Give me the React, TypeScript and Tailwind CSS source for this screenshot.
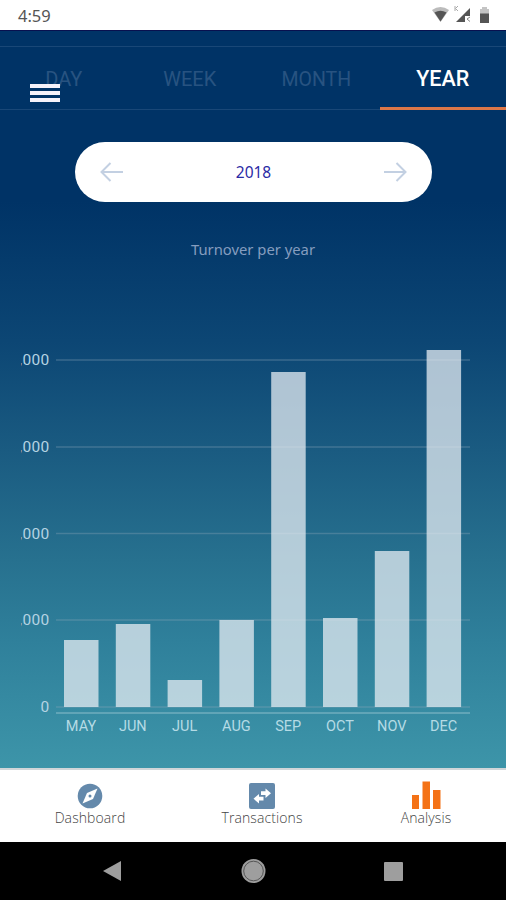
import type { ReactNode } from "react";

interface Bar {
  month: string;
  top: number;
}

const BASELINE = 707;

const BARS: Bar[] = [
  { month: "MAY", top: 640 },
  { month: "JUN", top: 624 },
  { month: "JUL", top: 680 },
  { month: "AUG", top: 620 },
  { month: "SEP", top: 372 },
  { month: "OCT", top: 618 },
  { month: "NOV", top: 551 },
  { month: "DEC", top: 350 },
];

const GRID = [
  { y: 360, label: ",000" },
  { y: 447, label: ",000" },
  { y: 533.5, label: ",000" },
  { y: 620, label: ",000" },
  { y: 707, label: "0" },
];

function StatusBar() {
  return (
    <div className="flex h-[30px] items-center justify-between bg-white pl-[18px] pr-[15px]">
      <span className="pt-[3px] font-['Noto_Sans',sans-serif] text-[16.5px] leading-none text-[#555]">
        4:59
      </span>
      <svg width="60" height="20" viewBox="0 0 60 20">
        <path d="M1 5Q9.500-1 18 5L9.500 17Z" fill="#bbb" />
        <path d="M3.500 7.500Q9.500 4 15.500 7.500L9.500 16.500Z" fill="#555" />
        <path d="M39 3V17H25Z" fill="#555" />
        <path d="M34 11h6v6h-6Z" fill="#fff" />
        <path d="M39 12l-3 2 3 2.500" fill="none" stroke="#888" />
        <path d="M24 1v5M27 1l-2.500 2.500L27 6" fill="none" stroke="#aaa" />
        <rect x="51" y="2" width="5" height="3" fill="#c4c4c4" />
        <rect x="49" y="4" width="9" height="5" fill="#c4c4c4" />
        <rect x="49" y="8.500" width="9" height="9.500" fill="#555" />
      </svg>
    </div>
  );
}

function MenuButton() {
  return (
    <button
      type="button"
      aria-label="Menu"
      className="absolute left-[30px] top-[37px] flex w-[30px] flex-col gap-[3px]"
    >
      <span className="h-1 w-full bg-[#f5f2fa]" />
      <span className="h-1 w-full bg-[#f5f2fa]" />
      <span className="h-1 w-full bg-[#f5f2fa]" />
    </button>
  );
}

function Tabs() {
  return (
    <div className="relative mt-[15px] grid h-16 grid-cols-4 border-y border-[#194777] font-[Roboto,sans-serif] text-[20px] text-[#285381]">
      <span className="flex items-center justify-center pl-px pt-px">DAY</span>
      <span className="flex items-center justify-center pt-px">WEEK</span>
      <span className="flex items-center justify-center pt-[3px] text-[19.5px]">MONTH</span>
      <span className="-mb-px flex items-center justify-center border-b-[3px] border-[#dc7748] pt-[5px] text-[21.5px] font-medium text-white">
        YEAR
      </span>
      <MenuButton />
    </div>
  );
}

function Arrow({ flip }: { flip?: boolean }) {
  return (
    <svg
      width="24"
      height="20"
      viewBox="0 0 24 20"
      fill="none"
      stroke="#c3d0e2"
      strokeWidth="2"
      className={flip ? "rotate-180" : ""}
    >
      <path d="M23 10H2M10.500 1L1.500 10l9 9" />
    </svg>
  );
}

function YearPicker() {
  return (
    <div className="mx-auto mt-8 flex h-[60px] w-[357px] items-center justify-between rounded-full bg-white px-[25px]">
      <Arrow />
      <span className="pl-px pt-0.5 font-['Noto_Sans',sans-serif] text-[15.5px] text-[#2a2aa5]">2018</span>
      <Arrow flip />
    </div>
  );
}

function TurnoverChart() {
  return (
    <svg
      width="506"
      height="440"
      viewBox="0 310 506 440"
      className="mt-[51px] block font-[Roboto,sans-serif] text-[14.5px]"
    >
      <clipPath id="labels">
        <rect x="21" y="310" width="40" height="440" />
      </clipPath>
      {GRID.map(({ y, label }) => (
        <g key={y}>
          <path d={`M56 ${y}H470`} stroke="#8da5b8" strokeOpacity="0.350" strokeWidth="1.500" />
          <text
            x="49.500"
            y={y + 5}
            textAnchor="end"
            fill="#b5d3e3"
            clipPath="url(#labels)"
            className="text-[15.5px] tracking-[0.3px]"
          >
            {label}
          </text>
        </g>
      ))}
      <path d="M56 713H470" stroke="#8bbdcc" strokeWidth="1.200" />
      {BARS.map(({ month, top }, i) => (
        <g key={month}>
          <rect
            x={64 + i * 51.8}
            y={top}
            width="34.500"
            height={BASELINE - top}
            fill="#e2eaf0"
            fillOpacity="0.760"
          />
          <text x={81 + i * 51.8} y="731.400" textAnchor="middle" fill="#b5dbe5">
            {month}
          </text>
        </g>
      ))}
    </svg>
  );
}

function NavItem({ label, className, children }: { label: string; className: string; children: ReactNode }) {
  return (
    <div className={`flex shrink-0 flex-col items-center ${className}`}>
      <div className="flex h-7 items-end">{children}</div>
      <span className="font-['Open_Sans',sans-serif] text-[14px] font-light leading-[17px] tracking-[0.1px] text-[#444]">
        {label}
      </span>
    </div>
  );
}

function BottomNav() {
  return (
    <div className="flex h-[74px] border-t-2 border-[#d0d6d9] bg-white pt-[11px]">
      <NavItem label="Dashboard" className="w-[180px]">
        <svg width="26" height="26" viewBox="0 0 26 26">
          <circle cx="13" cy="13" r="12.300" fill="#6489ab" />
          <path d="M20.500 5.500L16 16 5.500 20.500 10 10Z" fill="#fff" />
          <circle cx="13" cy="13" r="1.500" fill="#6489ab" />
        </svg>
      </NavItem>
      <NavItem label="Transactions" className="w-[164px]">
        <svg width="26" height="26" viewBox="0 0 26 26">
          <rect width="26" height="26" rx="2" fill="#6489ab" />
          <path
            d="M12 8.300h4.500V5.500l5.500 4.700-5.500 4.700v-2.800H12ZM14.500 13.700H10V11L4.500 15.700 10 20.400v-2.900h4.500Z"
            fill="#fff"
          />
        </svg>
      </NavItem>
      <NavItem label="Analysis" className="w-[162px] pl-0.5">
        <svg width="30" height="28" viewBox="0 0 30 28" fill="#f47216">
          <rect x="1" y="14" width="7" height="14" />
          <rect x="11.500" y="0.500" width="7.500" height="27.500" />
          <rect x="22" y="9" width="7.500" height="19" />
        </svg>
      </NavItem>
    </div>
  );
}

function SystemNav() {
  return (
    <div className="flex h-[58px] items-center bg-black">
      <svg width="506" height="58" viewBox="0 0 506 58" fill="#9e9e9e">
        <path d="M103 29L121 19V39Z" />
        <circle cx="253.500" cy="29" r="12" />
        <circle cx="253.500" cy="29" r="9.800" fill="none" stroke="#555" strokeWidth="1" />
        <rect x="384" y="20" width="19" height="19" rx="1" />
      </svg>
    </div>
  );
}

export default function App() {
  return (
    <div className="flex h-[900px] w-[506px] flex-col overflow-hidden">
      <StatusBar />
      <main className="h-[738px] border-t border-[#08104f] bg-[linear-gradient(#003366_0px,#003366_170px,#0c4674_310px,#1a5b81_420px,#27718f_530px,#2f809b_610px,#3d95a9_738px)]">
        <Tabs />
        <YearPicker />
        <p className="mt-[37px] text-center font-['Noto_Sans',sans-serif] text-[14.8px] leading-5 text-[#859dbf]">
          Turnover per year
        </p>
        <TurnoverChart />
      </main>
      <BottomNav />
      <SystemNav />
    </div>
  );
}
